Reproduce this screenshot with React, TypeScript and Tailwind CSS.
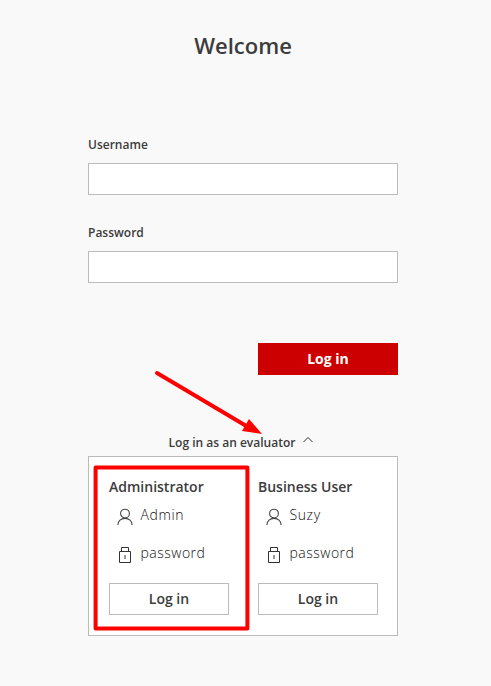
import React from "react";

function UserIcon() {
  return (
    <svg width="16" height="18" viewBox="0 0 16 18" fill="none" stroke="#444" strokeWidth="1.1">
      <circle cx="8" cy="5.6" r="4.4" />
      <path d="M0.9 17c0-4 3.2-6.6 7.1-6.6s7.1 2.6 7.1 6.6" />
    </svg>
  );
}

function LockIcon() {
  return (
    <svg width="16" height="18" viewBox="0 0 16 18" fill="none" stroke="#333">
      <path d="M2.5 5.5h11v11h-11zM4.5 5.5v-4h7v4" />
      <path d="M8 9v4" stroke="#999" strokeWidth="2" />
    </svg>
  );
}

function Field({ label, type }: { label: string; type: string }) {
  return (
    <label className="block h-[88px]">
      <span className="block h-[27px] text-[12px] leading-[18px] font-semibold">{label}</span>
      <input type={type} className="block h-8 w-full border border-[#bbb] bg-white px-2 outline-none" />
    </label>
  );
}

function Account({ role, user }: { role: string; user: string }) {
  return (
    <section className="w-[120px]">
      <h2 className="h-5 text-[14px] leading-5 font-semibold whitespace-nowrap">{role}</h2>
      <div className="mt-2 flex h-5 items-center pl-2">
        <span className="pt-1"><UserIcon /></span>
        <span className="ml-[7.5px] text-[14px] leading-5 font-light tracking-[0.6px] text-[#111]">{user}</span>
      </div>
      <div className="mt-[18px] flex h-5 items-center pl-2">
        <span className="pt-1"><LockIcon /></span>
        <span className="ml-[7.5px] text-[14px] leading-5 font-light tracking-[0.5px] text-[#111]">password</span>
      </div>
      <button className="mt-5 block h-8 w-full border border-[#bbb] bg-white text-[14px] leading-5 font-semibold">Log in</button>
    </section>
  );
}

export default function App() {
  return (
    <div className="relative h-[686px] w-[491px] overflow-hidden bg-[#f9f9f9] pl-[88px] font-['Open_Sans',sans-serif] text-[#3c3c3c]">
      <main className="w-[310px] pt-[29px]">
        <h1 className="h-[107px] text-center text-[22px] leading-8 font-semibold">Welcome</h1>
        <Field label="Username" type="text" />
        <Field label="Password" type="password" />
        <button className="mt-[31px] ml-auto block h-8 w-[140px] bg-[#c00] text-[14px] leading-5 font-bold text-white">Log in</button>
        <div className="mt-[59px] flex h-[22px] justify-center pr-1 text-[12px] leading-[18px] font-semibold">
          <span>Log in as an evaluator</span>
          <svg className="mt-[2px] ml-2" width="10" height="7" viewBox="0 0 10 7" fill="none" stroke="#333">
            <path d="M.5 6 5 1.5 9.5 6" />
          </svg>
        </div>
        <div className="flex h-[180px] gap-[29px] border border-[#bbb] bg-white pt-5 pl-5">
          <Account role="Administrator" user="Admin" />
          <Account role="Business User" user="Suzy" />
        </div>
      </main>
      <svg className="pointer-events-none absolute top-[365px] left-[88px]" width="182" height="271" viewBox="88 365 182 271" fill="none">
        <rect x="95.6" y="467.4" width="151.8" height="161" stroke="#f00" strokeWidth="4" strokeLinejoin="round" />
        <path d="M157 373 248 427" stroke="#f00" strokeWidth="4" strokeLinecap="round" />
        <path d="m249 419 13 15-20-3z" fill="#f00" />
      </svg>
    </div>
  );
}
